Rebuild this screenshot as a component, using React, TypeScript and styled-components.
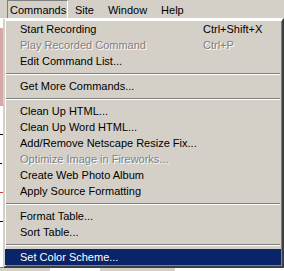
import { FC } from 'react';
import styled, { createGlobalStyle } from 'styled-components';

type MenuEntry =
  | { kind: 'item'; label: string; shortcut?: string; disabled?: boolean; active?: boolean }
  | { kind: 'sep' };

const entries: MenuEntry[] = [
  { kind: 'item', label: 'Start Recording', shortcut: 'Ctrl+Shift+X' },
  { kind: 'item', label: 'Play Recorded Command', shortcut: 'Ctrl+P', disabled: true },
  { kind: 'item', label: 'Edit Command List...' },
  { kind: 'sep' },
  { kind: 'item', label: 'Get More Commands...' },
  { kind: 'sep' },
  { kind: 'item', label: 'Clean Up HTML...' },
  { kind: 'item', label: 'Clean Up Word HTML...' },
  { kind: 'item', label: 'Add/Remove Netscape Resize Fix...' },
  { kind: 'item', label: 'Optimize Image in Fireworks...', disabled: true },
  { kind: 'item', label: 'Create Web Photo Album' },
  { kind: 'item', label: 'Apply Source Formatting' },
  { kind: 'sep' },
  { kind: 'item', label: 'Format Table...' },
  { kind: 'item', label: 'Sort Table...' },
  { kind: 'sep' },
  { kind: 'item', label: 'Set Color Scheme...', active: true },
];

const barItems = ['Commands', 'Site', 'Window', 'Help'];

const App: FC = () => {
  return (
    <>
      <GlobalStyle />
      <Page>
        <MenuBar>
          {barItems.map((name, i) => (
            <BarItem key={name} $open={i === 0}>
              {name}
            </BarItem>
          ))}
        </MenuBar>
        <Workspace>
          <Document>
            <Gutter>
              <PinkBlock />
              <Tick $w={3} $color="#000" />
              <Tick $w={2} $color="#000" />
              <Tick $w={3} $color="#c04040" />
              <Tick $w={3} $color="#000" />
            </Gutter>
          </Document>
          <StatusBar>
            <StatusCell $w={50} $bg="#d4d0c8" />
            <StatusCell $w={50} $bg="#ffffff" />
            <StatusCell $w={75} $bg="#d4d0c8" />
            <StatusCell $w={109} $bg="#ffffff" />
          </StatusBar>
        </Workspace>

        <Popup>
          {entries.map((entry, i) =>
            entry.kind === 'sep' ? (
              <Separator key={i} />
            ) : (
              <Row key={i} $active={!!entry.active}>
                <Label $disabled={!!entry.disabled}>{entry.label}</Label>
                {entry.shortcut && (
                  <Shortcut $disabled={!!entry.disabled}>{entry.shortcut}</Shortcut>
                )}
              </Row>
            )
          )}
        </Popup>
      </Page>
    </>
  );
};

export default App;

const GlobalStyle = createGlobalStyle`
  html, body {
    margin: 0;
    padding: 0;
    background: #ffffff;
  }
  body {
    font-family: "Liberation Sans", Arial, sans-serif;
    font-size: 11px;
    color: #000;
    -webkit-font-smoothing: none;
  }
`;

const Page = styled.div`
  position: relative;
  width: 284px;
  height: 271px;
  overflow: hidden;
  display: flex;
  flex-direction: column;
`;

const MenuBar = styled.div`
  display: flex;
  align-items: stretch;
  height: 18px;
  padding-left: 7px;
  background: #d4d0c8;
  box-sizing: border-box;
`;

const BarItem = styled.div<{ $open: boolean }>`
  display: flex;
  align-items: center;
  box-sizing: border-box;
  line-height: 16px;
  border: 1px solid transparent;
  border-bottom: none;
  padding: 0 6px;
  ${(p) =>
    p.$open &&
    `
    padding: 0 0 0 2px;
    width: 61px;
    border-top-color: #808080;
    border-left-color: #808080;
    border-right-color: #ffffff;
  `}
`;

const Workspace = styled.div`
  flex: 1;
  display: flex;
  flex-direction: column;
`;

const Document = styled.div`
  flex: 1;
  background: #ffffff;
  display: flex;
`;

const Gutter = styled.div`
  width: 3px;
  display: flex;
  flex-direction: column;
  gap: 28px;
  padding-top: 10px;
`;

const PinkBlock = styled.div`
  width: 3px;
  height: 78px;
  background: #d8a8a8;
`;

const Tick = styled.div<{ $w: number; $color: string }>`
  width: ${(p) => p.$w}px;
  height: 1px;
  background: ${(p) => p.$color};
`;

const StatusBar = styled.div`
  height: 3px;
  display: flex;
  border-top: 1px solid #808080;
`;

const StatusCell = styled.div<{ $w: number; $bg: string }>`
  width: ${(p) => p.$w}px;
  background: ${(p) => p.$bg};
`;

const Popup = styled.div`
  position: absolute;
  top: 18px;
  left: 3px;
  width: 281px;
  box-sizing: border-box;
  background: #d4d0c8;
  padding: 1px 1px 1px 0;
  border-style: solid;
  border-width: 2px;
  border-color: #ffffff #404040 #404040 #d4d0c8;
  box-shadow: inset 1px 1px 0 #ffffff, inset -1px -1px 0 #808080;
  display: flex;
  flex-direction: column;
`;

const Row = styled.div<{ $active: boolean }>`
  display: grid;
  grid-template-columns: 183px 1fr;
  height: 16px;
  line-height: 16px;
  padding-left: 15px;
  white-space: nowrap;
  background: ${(p) => (p.$active ? '#0a246a' : 'transparent')};
  color: ${(p) => (p.$active ? '#ffffff' : '#000000')};
`;

const Label = styled.span<{ $disabled: boolean }>`
  ${(p) =>
    p.$disabled &&
    `
    color: #808080;
    text-shadow: 1px 1px 0 #ffffff;
  `}
`;

const Shortcut = styled(Label)``;

const Separator = styled.div`
  height: 9px;
  display: flex;
  flex-direction: column;
  justify-content: center;
  padding: 0 1px;

  &::before {
    content: '';
    display: block;
    height: 1px;
    background: #808080;
  }
  &::after {
    content: '';
    display: block;
    height: 1px;
    background: #ffffff;
  }
`;
